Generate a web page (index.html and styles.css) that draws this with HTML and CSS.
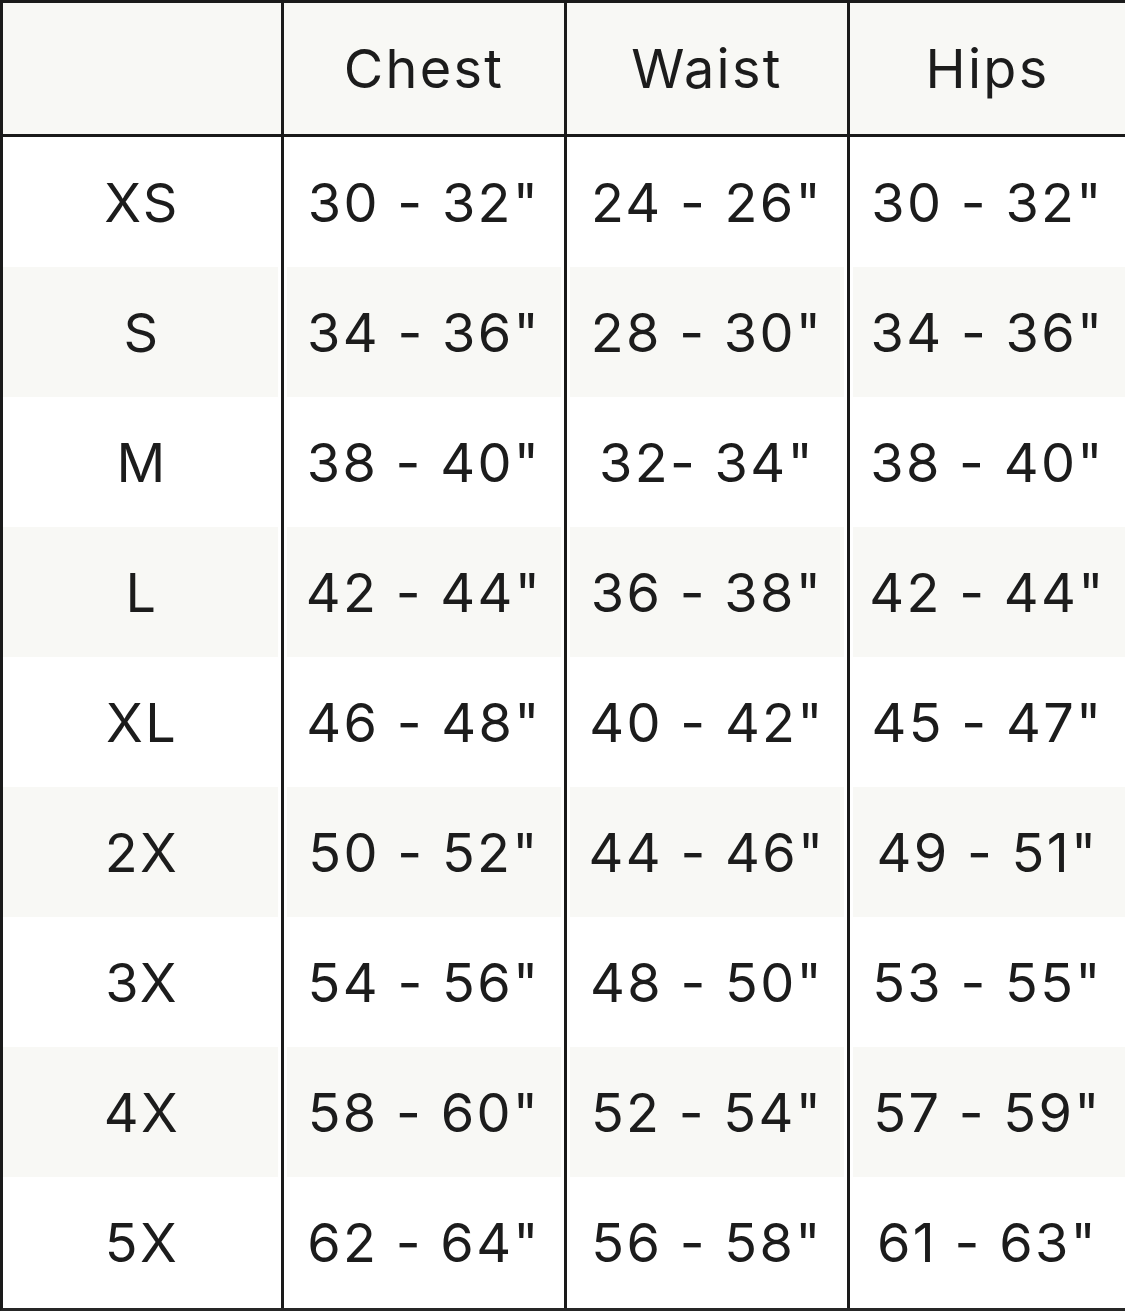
FILE: index.html
```html
<!DOCTYPE html>
<html lang="en">
<head>
<meta charset="utf-8">
<title>Size Chart</title>
<link rel="stylesheet" href="styles.css">
</head>
<body>
<table class="size-chart">
  <colgroup>
    <col class="c-size">
    <col class="c-mid">
    <col class="c-mid">
    <col class="c-last">
  </colgroup>
  <thead>
    <tr class="head">
      <th></th>
      <th>Chest</th>
      <th>Waist</th>
      <th>Hips</th>
    </tr>
  </thead>
  <tbody>
    <tr><td>XS</td><td>30 - 32"</td><td>24 - 26"</td><td>30 - 32"</td></tr>
    <tr class="alt"><td>S</td><td>34 - 36"</td><td>28 - 30"</td><td>34 - 36"</td></tr>
    <tr><td>M</td><td>38 - 40"</td><td>32- 34"</td><td>38 - 40"</td></tr>
    <tr class="alt"><td>L</td><td>42 - 44"</td><td>36 - 38"</td><td>42 - 44"</td></tr>
    <tr><td>XL</td><td>46 - 48"</td><td>40 - 42"</td><td>45 - 47"</td></tr>
    <tr class="alt"><td>2X</td><td>50 - 52"</td><td>44 - 46"</td><td>49 - 51"</td></tr>
    <tr><td>3X</td><td>54 - 56"</td><td>48 - 50"</td><td>53 - 55"</td></tr>
    <tr class="alt"><td>4X</td><td>58 - 60"</td><td>52 - 54"</td><td>57 - 59"</td></tr>
    <tr class="last"><td>5X</td><td>62 - 64"</td><td>56 - 58"</td><td>61 - 63"</td></tr>
  </tbody>
</table>
</body>
</html>
```

FILE: styles.css
```css
html, body {
  margin: 0;
  padding: 0;
  background: #ffffff;
}

.size-chart {
  width: 1125px;
  table-layout: fixed;
  border-collapse: separate;
  border-spacing: 0;
  border-top: 3px solid #1a1a1a;
  border-left: 3px solid #1a1a1a;
  border-bottom: 3px solid #262626;
  font-family: "Inter", "Liberation Sans", sans-serif;
  font-size: 54px;
  font-weight: 400;
  color: #1c1c1c;
  letter-spacing: 2.3px;
}

.c-size { width: 281px; }
.c-mid { width: 283px; }
.c-last { width: 275px; }

.size-chart th,
.size-chart td {
  box-sizing: border-box;
  height: 130px;
  padding: 0;
  text-align: center;
  vertical-align: middle;
  font-weight: 400;
  white-space: nowrap;
}

.size-chart th:not(:last-child),
.size-chart td:not(:last-child) {
  border-right: 3px solid #1a1a1a;
}

.head th {
  height: 134px;
  background: #f8f8f5;
  border-bottom: 3px solid #1a1a1a;
}

.alt td {
  background: #f8f8f5;
}

.alt td:not(:first-child) {
  box-shadow: inset 3px 0 0 #ffffff;
}

.alt td:not(:last-child) {
  box-shadow: inset -3px 0 0 #ffffff;
}

.alt td:not(:first-child):not(:last-child) {
  box-shadow: inset 3px 0 0 #ffffff, inset -3px 0 0 #ffffff;
}

.last td {
  height: 131px;
}
```
